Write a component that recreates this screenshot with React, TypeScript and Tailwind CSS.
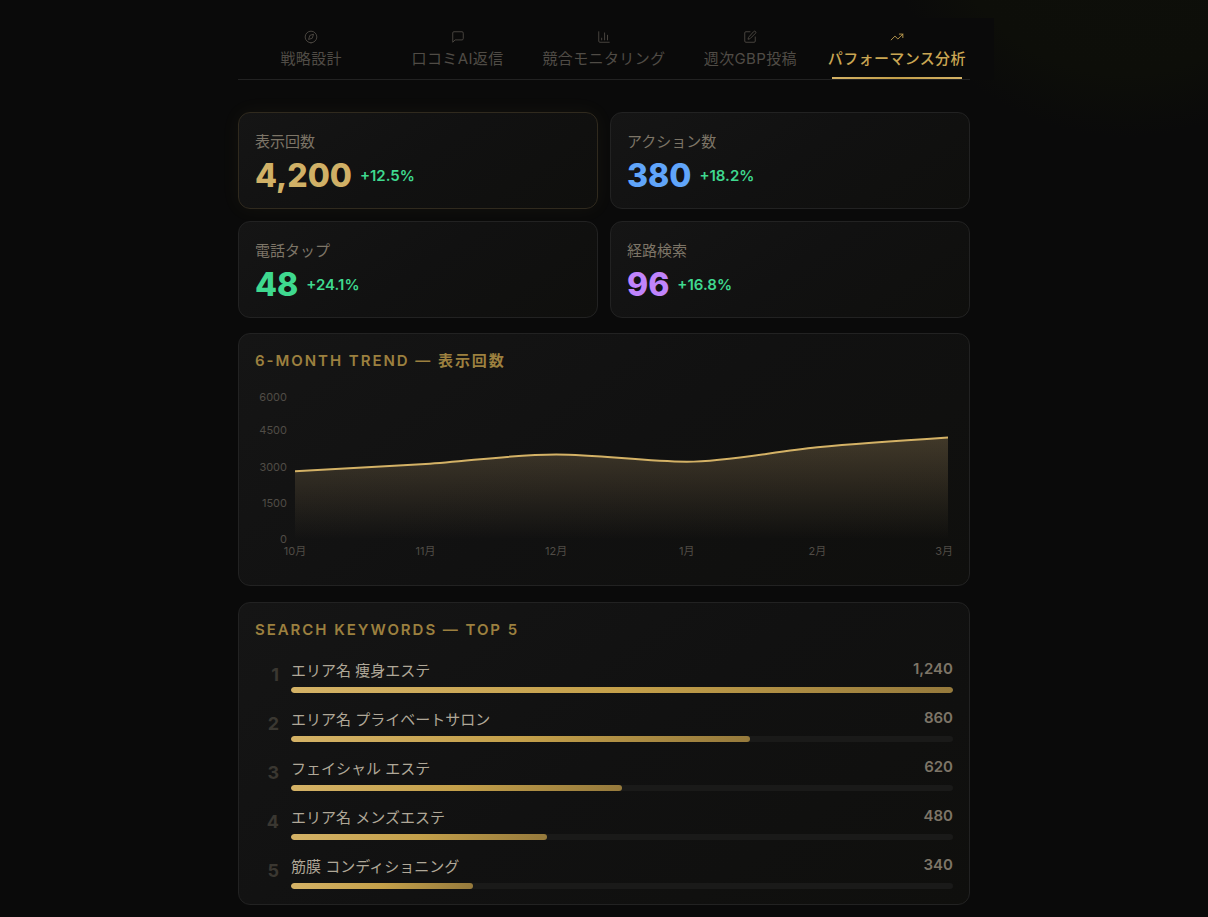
import { useId, useState } from 'react';

interface Tab {
    id: string;
    label: string;
    paths: string[];
}

interface Stat {
    label: string;
    value: string;
    change: string;
    color: string;
    highlight?: boolean;
}

const TABS: Tab[] = [
    {
        id: 'strategy',
        label: '戦略設計',
        paths: [
            'M12 22a10 10 0 1 0 0-20 10 10 0 0 0 0 20z',
            'M16.2 7.8l-2.1 6.3-6.3 2.1 2.1-6.3z',
        ],
    },
    {
        id: 'reviews',
        label: '口コミAI返信',
        paths: ['M21 15a2 2 0 0 1-2 2H7l-4 4V5a2 2 0 0 1 2-2h14a2 2 0 0 1 2 2z'],
    },
    {
        id: 'monitoring',
        label: '競合モニタリング',
        paths: ['M3 3v16a2 2 0 0 0 2 2h16', 'M8 17v-3', 'M13 17V5', 'M18 17V9'],
    },
    {
        id: 'posts',
        label: '週次GBP投稿',
        paths: [
            'M12 3H5a2 2 0 0 0-2 2v14a2 2 0 0 0 2 2h14a2 2 0 0 0 2-2v-7',
            'M18.4 2.6a2.1 2.1 0 0 1 3 3l-9 9a2 2 0 0 1-.9.5l-2.9.8.8-2.9a2 2 0 0 1 .5-.9z',
        ],
    },
    {
        id: 'performance',
        label: 'パフォーマンス分析',
        paths: ['M22 7l-8.5 8.5-5-5L2 17', 'M16 7h6v6'],
    },
];

const STATS: Stat[] = [
    { label: '表示回数', value: '4,200', change: '+12.5%', color: 'text-[#d0b066]', highlight: true },
    { label: 'アクション数', value: '380', change: '+18.2%', color: 'text-[#60a5fa]' },
    { label: '電話タップ', value: '48', change: '+24.1%', color: 'text-[#3fd98f]' },
    { label: '経路検索', value: '96', change: '+16.8%', color: 'text-[#c084fc]' },
];

const TREND = [
    { month: '10月', value: 2800 },
    { month: '11月', value: 3100 },
    { month: '12月', value: 3500 },
    { month: '1月', value: 3200 },
    { month: '2月', value: 3800 },
    { month: '3月', value: 4200 },
];

const KEYWORDS = [
    { word: 'エリア名 痩身エステ', count: 1240 },
    { word: 'エリア名 プライベートサロン', count: 860 },
    { word: 'フェイシャル エステ', count: 620 },
    { word: 'エリア名 メンズエステ', count: 480 },
    { word: '筋膜 コンディショニング', count: 340 },
];

const CARD = 'rounded-xl border bg-linear-145 from-[#151515] via-[#111111] to-[#0f0f0d]';

// chart area inside the 698x190 drawing
const LEFT = 40;
const RIGHT = 693;
const TOP = 11;
const BOTTOM = 156;
const MAX = 6000;

// monotone cubic through all points, so the curve never overshoots a month
const curve = (points: number[][]) => {
    const n = points.length;
    const slope = (i: number) =>
        (points[i + 1][1] - points[i][1]) / (points[i + 1][0] - points[i][0]);
    const tangents = points.map((_, i) => {
        if (i === 0 || i === n - 1) return 0;
        const a = slope(i - 1);
        const b = slope(i);
        if (a * b <= 0) return 0;
        return Math.sign(a) * Math.min(2 * Math.abs(a), 2 * Math.abs(b), Math.abs(a + b) / 2);
    });
    tangents[0] = (3 * slope(0) - tangents[1]) / 2;
    tangents[n - 1] = (3 * slope(n - 2) - tangents[n - 2]) / 2;

    let d = `M${points[0][0]},${points[0][1]}`;
    for (let i = 0; i < n - 1; i++) {
        const [x0, y0] = points[i];
        const [x1, y1] = points[i + 1];
        const dx = (x1 - x0) / 3;
        d += `C${x0 + dx},${y0 + dx * tangents[i]} ${x1 - dx},${y1 - dx * tangents[i + 1]} ${x1},${y1}`;
    }
    return d;
};

const TrendChart = () => {
    const fillId = useId();
    const points = TREND.map((item, i) => [
        LEFT + ((RIGHT - LEFT) * i) / (TREND.length - 1),
        BOTTOM - (item.value / MAX) * (BOTTOM - TOP),
    ]);
    const line = curve(points);

    return (
        <svg viewBox="0 0 698 190" className="block w-full text-[11px]" role="img" aria-label="表示回数">
            <defs>
                <linearGradient id={fillId} x1="0" y1="0" x2="0" y2="1">
                    <stop offset="0%" stopColor="#d4b278" stopOpacity="0.25" />
                    <stop offset="100%" stopColor="#d4b278" stopOpacity="0" />
                </linearGradient>
            </defs>
            <path d={`${line}L${RIGHT},${BOTTOM}L${LEFT},${BOTTOM}Z`} fill={`url(#${fillId})`} />
            <path d={line} fill="none" stroke="#d4b266" strokeWidth="2" />
            {[0, 1500, 3000, 4500, 6000].map((tick) => (
                <text
                    key={tick}
                    x={LEFT - 8}
                    y={tick === MAX ? 18 : BOTTOM + 4 - (tick / MAX) * (BOTTOM - TOP)}
                    textAnchor="end"
                    fill="#504c46"
                >
                    {tick}
                </text>
            ))}
            {TREND.map((item, i) => (
                <text
                    key={item.month}
                    x={i === TREND.length - 1 ? 698 : points[i][0]}
                    y={BOTTOM + 16}
                    textAnchor={i === TREND.length - 1 ? 'end' : 'middle'}
                    fill="#504c46"
                >
                    {item.month}
                </text>
            ))}
        </svg>
    );
};

const App = () => {
    const [activeTab, setActiveTab] = useState('performance');

    return (
        <div className="relative min-h-screen overflow-hidden bg-[#0a0a0a] font-['Inter','Noto_Sans_CJK_JP',sans-serif] text-[15px] leading-[23px]">
            <div className="pointer-events-none absolute -top-[363px] -right-[167px] size-[500px] bg-[radial-gradient(closest-side,#0e0f0a,#0d0e09_75%,#0a0a0a00)]" />

            <main className="relative mx-auto max-w-[780px] px-6 pt-[18px] pb-3">
                <nav className="-mx-6 bg-[#0a0a0a] px-6">
                    <div className="grid grid-cols-5 border-b border-[#222222]">
                        {TABS.map((tab) => (
                            <button
                                key={tab.id}
                                onClick={() => setActiveTab(tab.id)}
                                className={`relative flex flex-col items-center gap-[3px] pt-3 pb-[9px] tracking-wide whitespace-nowrap ${tab.id === activeTab ? 'font-medium text-[#c9a653]' : 'text-[#504c46]'}`}
                            >
                                <svg
                                    className="size-[14px]"
                                    viewBox="0 0 24 24"
                                    fill="none"
                                    stroke="currentColor"
                                    strokeWidth="1.5"
                                    strokeLinecap="round"
                                    strokeLinejoin="round"
                                >
                                    {tab.paths.map((d) => (
                                        <path key={d} d={d} />
                                    ))}
                                </svg>
                                <span>{tab.label}</span>
                                {tab.id === activeTab && (
                                    <span className="absolute inset-x-2 bottom-0 h-[2px] bg-linear-to-r from-[#d4b266] via-[#c4a04a] to-[#d4b266]" />
                                )}
                            </button>
                        ))}
                    </div>
                </nav>

                <section className="mt-8 grid grid-cols-2 gap-3">
                    {STATS.map((stat) => (
                        <div
                            key={stat.label}
                            className={`${CARD} px-4 pt-[17px] pb-[14px] ${stat.highlight ? 'border-[#302a1e] shadow-[0_0_20px_rgba(212,190,102,0.05)]' : 'border-[#222222]'}`}
                        >
                            <p className="text-[#7d7567]">{stat.label}</p>
                            <div className="mt-1 flex items-center gap-2">
                                <span className={`text-[32px] leading-[37px] font-extrabold ${stat.color}`}>{stat.value}</span>
                                <span className="font-semibold text-[#3fd98f]">{stat.change}</span>
                            </div>
                        </div>
                    ))}
                </section>

                <section className={`${CARD} mt-[15px] border-[#222222] px-4 pt-[15px] pb-3`}>
                    <h2 className="mb-[11px] font-semibold tracking-[0.13em] text-[#9c803f]">6-MONTH TREND — 表示回数</h2>
                    <TrendChart />
                </section>

                <section className={`${CARD} mt-4 border-[#222222] px-4 py-[15px]`}>
                    <h2 className="font-semibold tracking-[0.13em] text-[#9c803f]">SEARCH KEYWORDS — TOP 5</h2>
                    <ol className="mt-[18px] flex flex-col gap-[15px]">
                        {KEYWORDS.map((item, i) => (
                            <li key={item.word} className="flex gap-3">
                                <span className="w-6 text-right text-lg leading-[31px] font-bold text-[#3a3731]">{i + 1}</span>
                                <div className="flex-1">
                                    <div className="mb-[5px] flex justify-between">
                                        <span className="text-[#b0a898]">{item.word}</span>
                                        <span className="leading-[19px] font-semibold text-[#7d7567]">{item.count.toLocaleString('en-US')}</span>
                                    </div>
                                    <div className="h-[6px] overflow-hidden rounded-full bg-[#1a1a19]">
                                        <div
                                            className="h-full rounded-full bg-linear-to-r from-[#d4b266] via-[#c4a04a] to-[#967a3c]"
                                            style={{ width: `${(item.count / KEYWORDS[0].count) * 100}%` }}
                                        />
                                    </div>
                                </div>
                            </li>
                        ))}
                    </ol>
                </section>
            </main>
        </div>
    );
};

export default App;
